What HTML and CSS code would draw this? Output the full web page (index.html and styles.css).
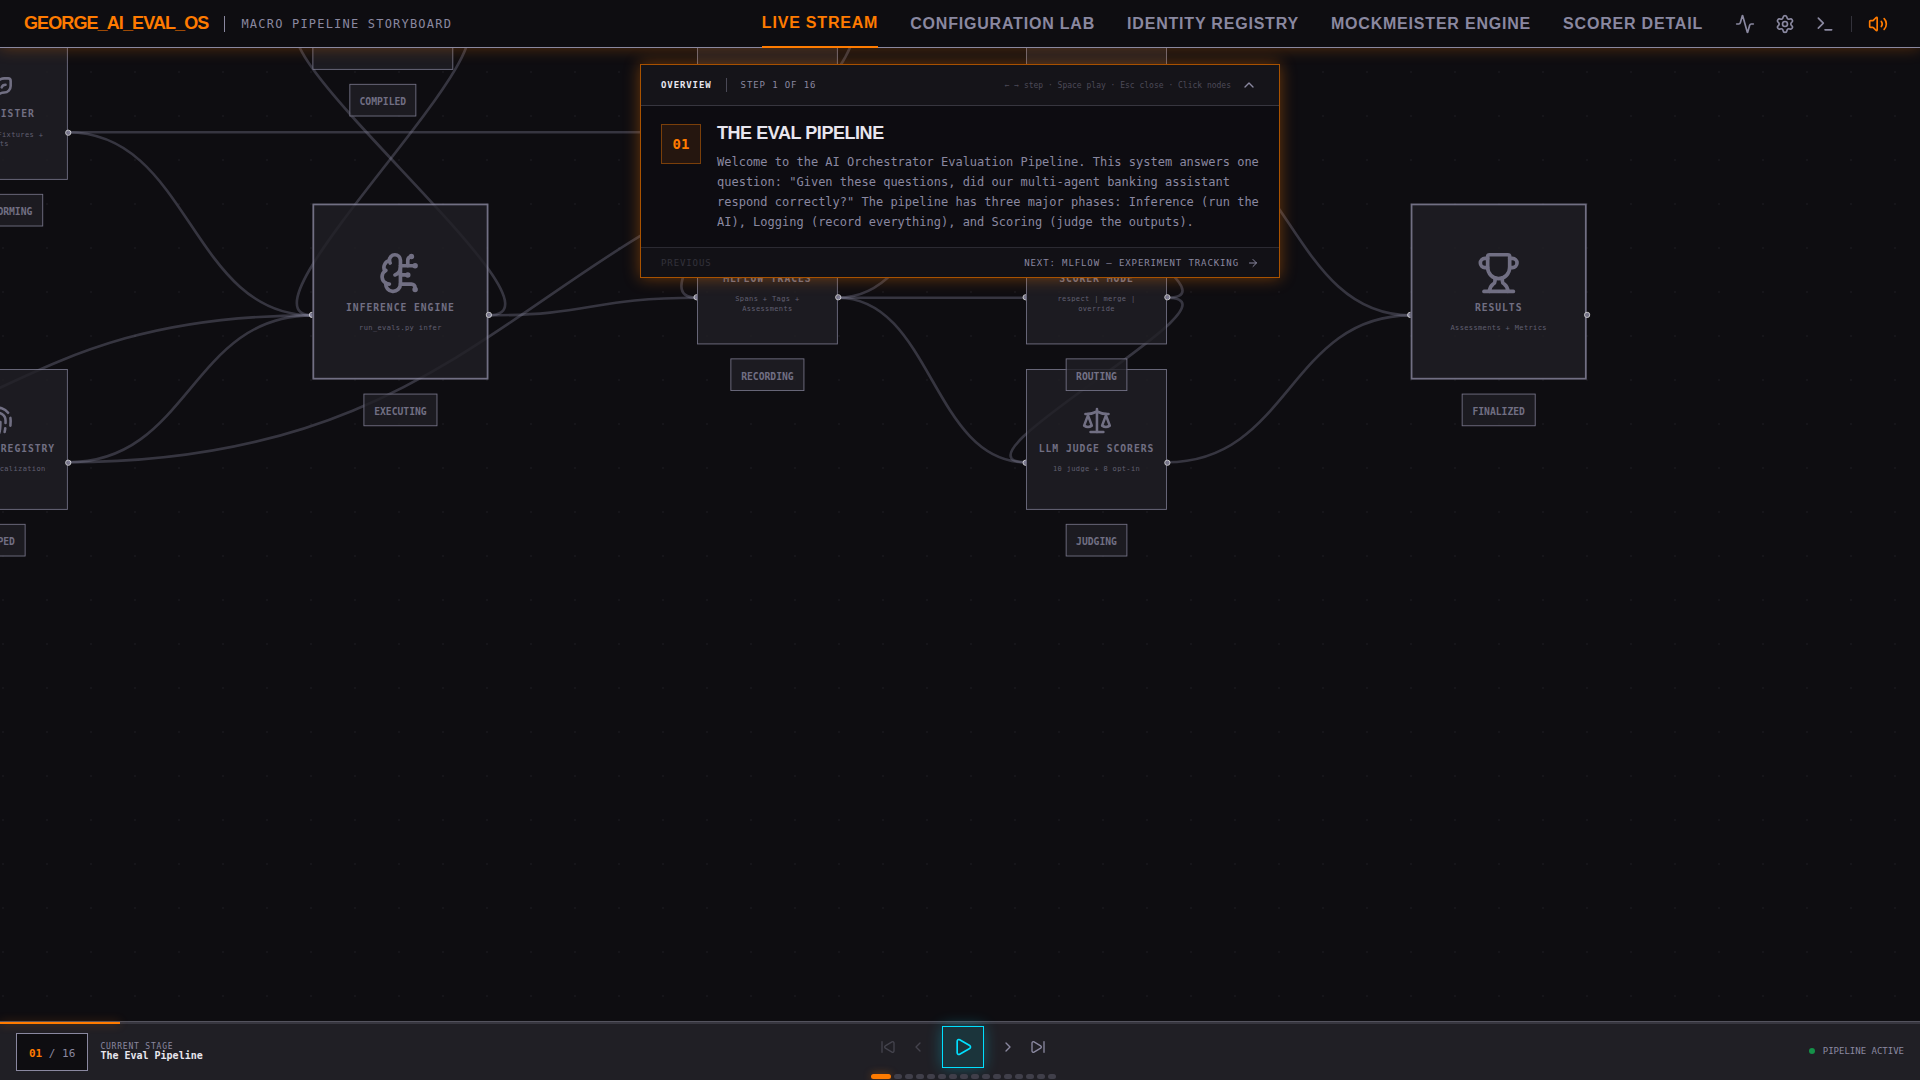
FILE: index.html
```html
<!DOCTYPE html>
<html lang="en">
<head>
    <meta charset="UTF-8">
    <meta name="viewport" content="width=device-width, initial-scale=1.0">
    <title>GEORGE_AI_EVAL_OS</title>
    <link rel="stylesheet" href="styles.css">
</head>
<body>
    <header class="topbar">
        <div class="brand">
            <span class="logo">GEORGE_AI_EVAL_OS</span>
            <span class="brand-divider"></span>
            <span class="subtitle">MACRO PIPELINE STORYBOARD</span>
        </div>
        <div class="topbar-right">
            <nav class="nav">
                <a href="#live" class="active">LIVE STREAM</a>
                <a href="#config">CONFIGURATION LAB</a>
                <a href="#identity">IDENTITY REGISTRY</a>
                <a href="#mock">MOCKMEISTER ENGINE</a>
                <a href="#scorer">SCORER DETAIL</a>
            </nav>
            <div class="tools">
                <button type="button" aria-label="Activity">
                    <svg class="icon" viewBox="0 0 24 24"><path d="M22 12h-2.48a2 2 0 0 0-1.93 1.46l-2.35 8.36a.25.25 0 0 1-.48 0L9.24 2.18a.25.25 0 0 0-.48 0l-2.35 8.36A2 2 0 0 1 4.49 12H2"/></svg>
                </button>
                <button type="button" aria-label="Settings">
                    <svg class="icon" viewBox="0 0 24 24"><path d="M9.671 4.136a2.34 2.34 0 0 1 4.659 0 2.34 2.34 0 0 0 3.319 1.915 2.34 2.34 0 0 1 2.33 4.033 2.34 2.34 0 0 0 0 3.831 2.34 2.34 0 0 1-2.33 4.033 2.34 2.34 0 0 0-3.319 1.915 2.34 2.34 0 0 1-4.659 0 2.34 2.34 0 0 0-3.32-1.915 2.34 2.34 0 0 1-2.33-4.033 2.34 2.34 0 0 0 0-3.831A2.34 2.34 0 0 1 6.35 6.051a2.34 2.34 0 0 0 3.319-1.915"/><circle cx="12" cy="12" r="3"/></svg>
                </button>
                <button type="button" aria-label="Terminal">
                    <svg class="icon" viewBox="0 0 24 24"><path d="M12 19h8"/><path d="m4 17 6-6-6-6"/></svg>
                </button>
                <span class="tools-divider"></span>
                <button type="button" class="sound" aria-label="Sound">
                    <svg class="icon" viewBox="0 0 24 24"><path d="M11 4.702a.705.705 0 0 0-1.203-.498L6.413 7.587A1.4 1.4 0 0 1 5.416 8H3a1 1 0 0 0-1 1v6a1 1 0 0 0 1 1h2.416a1.4 1.4 0 0 1 .997.413l3.383 3.384A.705.705 0 0 0 11 19.298z"/><path d="M16 9a5 5 0 0 1 0 6"/><path d="M19.364 18.364a9 9 0 0 0 0-12.728"/></svg>
                </button>
            </div>
        </div>
    </header>

    <main class="canvas">
        <div class="viewport">
            <svg class="edges" width="1" height="1">
                <path d="M160 231 C705 231 705 231 1249 231"/>
                <path d="M160 231 C299 231 299 439 438 439"/>
                <path d="M-276 606 C80 606 80 439 438 439"/>
                <path d="M160 606 C299 606 299 439 438 439"/>
                <path d="M160 606 C705 606 705 231 1249 231"/>
                <path d="M598 106 C698 106 338 439 438 439"/>
                <path d="M638 439 C750 439 326 106 438 106"/>
                <path d="M638 439 C756 439 756 419 875 419"/>
                <path d="M1035 106 C1135 106 775 419 875 419"/>
                <path d="M1035 419 C1142 419 1142 231 1249 231"/>
                <path d="M1035 419 L1249 419"/>
                <path d="M1035 419 C1142 419 1142 606 1249 606"/>
                <path d="M1409 419 C1509 419 1149 231 1249 231"/>
                <path d="M1409 419 C1509 419 1149 606 1249 606"/>
                <path d="M1409 231 C1548 231 1548 439 1686 439"/>
                <path d="M1409 606 C1548 606 1548 439 1686 439"/>
            </svg>

            <div class="node mockmeister">
                <span class="handle in"></span>
                <div class="box">
                    <svg class="icon" viewBox="0 0 24 24"><path d="M18 11c-1.5 0-2.5.5-3 2"/><path d="M4 6a2 2 0 0 0-2 2v4a5 5 0 0 0 5 5 8 8 0 0 1 5 2 8 8 0 0 1 5-2 5 5 0 0 0 5-5V8a2 2 0 0 0-2-2h-3a8 8 0 0 0-5 2 8 8 0 0 0-5-2z"/><path d="M6 11c1.5 0 2.5.5 3 2"/></svg>
                    <div class="name">MOCKMEISTER</div>
                    <div class="detail">Tool Mock Fixtures +<br>Tests</div>
                </div>
                <div class="state">TRANSFORMING</div>
                <span class="handle out"></span>
            </div>

            <div class="node registry">
                <span class="handle in"></span>
                <div class="box">
                    <svg class="icon" viewBox="0 0 24 24"><path d="M12 10a2 2 0 0 0-2 2c0 1.02-.1 2.51-.26 4"/><path d="M14 13.12c0 2.38 0 6.38-1 8.88"/><path d="M17.29 21.02c.12-.6.43-2.3.5-3.02"/><path d="M2 12a10 10 0 0 1 18-6"/><path d="M2 16h.01"/><path d="M21.8 16c.2-2 .131-5.354 0-6"/><path d="M5 19.5C5.5 18 6 15 6 12a6 6 0 0 1 .34-2"/><path d="M8.65 22c.21-.66.45-1.32.57-2"/><path d="M9 6.8a6 6 0 0 1 9 5.2v2"/></svg>
                    <div class="name">IDENTITY REGISTRY</div>
                    <div class="detail">Identity Localization</div>
                </div>
                <div class="state">MAPPED</div>
                <span class="handle out"></span>
            </div>

            <div class="node compiler">
                <span class="handle in"></span>
                <div class="box"></div>
                <div class="state">COMPILED</div>
                <span class="handle out"></span>
            </div>

            <div class="node large inference">
                <span class="handle in"></span>
                <div class="box">
                    <svg class="icon" viewBox="0 0 24 24"><path d="M12 5a3 3 0 1 0-5.997.125 4 4 0 0 0-2.526 5.77 4 4 0 0 0 .556 6.588A4 4 0 1 0 12 18Z"/><path d="M9 13a4.5 4.5 0 0 0 3-4"/><path d="M6.003 5.125A3 3 0 0 0 6.401 6.5"/><path d="M3.477 10.896a4 4 0 0 1 .585-.396"/><path d="M6 18a4 4 0 0 1-1.967-.516"/><path d="M12 13h4"/><path d="M12 18h6a2 2 0 0 1 2 2v1"/><path d="M12 8h8"/><path d="M16 8V5a2 2 0 0 1 2-2"/><circle cx="16" cy="13" r=".5"/><circle cx="18" cy="3" r=".5"/><circle cx="20" cy="21" r=".5"/><circle cx="20" cy="8" r=".5"/></svg>
                    <div class="name">INFERENCE ENGINE</div>
                    <div class="detail">run_evals.py infer</div>
                </div>
                <div class="state">EXECUTING</div>
                <span class="handle out"></span>
            </div>

            <div class="node mlflow">
                <div class="box"></div>
                <span class="handle out"></span>
            </div>

            <div class="node traces">
                <span class="handle in"></span>
                <div class="box">
                    <svg class="icon" viewBox="0 0 24 24"><path d="M22 12h-4l-3 9L9 3l-3 9H2"/></svg>
                    <div class="name">MLFLOW TRACES</div>
                    <div class="detail">Spans + Tags +<br>Assessments</div>
                </div>
                <div class="state">RECORDING</div>
                <span class="handle out"></span>
            </div>

            <div class="node code-scorers">
                <span class="handle in"></span>
                <div class="box"></div>
                <span class="handle out"></span>
            </div>

            <div class="node judge">
                <span class="handle in"></span>
                <div class="box">
                    <svg class="icon" viewBox="0 0 24 24"><path d="M12 3v18"/><path d="m19 8 3 8a5 5 0 0 1-6 0zV7"/><path d="M3 7h1a17 17 0 0 0 8-2 17 17 0 0 0 8 2h1"/><path d="m5 8 3 8a5 5 0 0 1-6 0zV7"/><path d="M7 21h10"/></svg>
                    <div class="name">LLM JUDGE SCORERS</div>
                    <div class="detail">10 judge + 8 opt-in</div>
                </div>
                <div class="state">JUDGING</div>
                <span class="handle out"></span>
            </div>

            <div class="node scorer-mode">
                <span class="handle in"></span>
                <div class="box">
                    <svg class="icon" viewBox="0 0 24 24"><path d="M6 3v12"/><circle cx="18" cy="6" r="3"/><circle cx="6" cy="18" r="3"/><path d="M18 9a9 9 0 0 1-9 9"/></svg>
                    <div class="name">SCORER MODE</div>
                    <div class="detail">respect | merge |<br>override</div>
                </div>
                <div class="state">ROUTING</div>
                <span class="handle out"></span>
            </div>

            <div class="node large results">
                <span class="handle in"></span>
                <div class="box">
                    <svg class="icon" viewBox="0 0 24 24"><path d="M10 14.66v1.626a2 2 0 0 1-.976 1.696A5 5 0 0 0 7 21.978"/><path d="M14 14.66v1.626a2 2 0 0 0 .976 1.696A5 5 0 0 1 17 21.978"/><path d="M18 9h1.5a1 1 0 0 0 0-5H18"/><path d="M4 22h16"/><path d="M6 9a6 6 0 0 0 12 0V3a1 1 0 0 0-1-1H7a1 1 0 0 0-1 1z"/><path d="M6 9H4.5a1 1 0 0 1 0-5H6"/></svg>
                    <div class="name">RESULTS</div>
                    <div class="detail">Assessments + Metrics</div>
                </div>
                <div class="state">FINALIZED</div>
                <span class="handle out"></span>
            </div>
        </div>

        <section class="panel">
            <div class="panel-head">
                <strong>OVERVIEW</strong>
                <span class="panel-divider"></span>
                <span>STEP 1 OF 16</span>
                <span class="hint">← → step · Space play · Esc close · Click nodes</span>
                <button type="button" class="collapse" aria-label="Collapse">
                    <svg class="icon" viewBox="0 0 24 24"><path d="m18 15-6-6-6 6"/></svg>
                </button>
            </div>
            <div class="panel-body">
                <div class="step-number">01</div>
                <div>
                    <h1>THE EVAL PIPELINE</h1>
                    <p>Welcome to the AI Orchestrator Evaluation Pipeline. This system answers one question: "Given these questions, did our multi-agent banking assistant respond correctly?" The pipeline has three major phases: Inference (run the AI), Logging (record everything), and Scoring (judge the outputs).</p>
                </div>
            </div>
            <div class="panel-foot">
                <button type="button" disabled>PREVIOUS</button>
                <button type="button">
                    NEXT: MLFLOW — EXPERIMENT TRACKING
                    <svg class="icon" viewBox="0 0 24 24"><path d="M5 12h14"/><path d="m12 5 7 7-7 7"/></svg>
                </button>
            </div>
        </section>
    </main>

    <footer class="player">
        <div class="track"><div class="track-fill" style="width: 6.25%"></div></div>
        <div class="player-row">
            <div class="stage">
                <div class="counter"><b>01</b> / 16</div>
                <div>
                    <div class="stage-label">CURRENT STAGE</div>
                    <div class="stage-name">The Eval Pipeline</div>
                </div>
            </div>
            <div class="controls">
                <div class="buttons">
                    <button type="button" aria-label="First step" disabled>
                        <svg class="icon" viewBox="0 0 24 24"><path d="M17.971 4.285A2 2 0 0 1 21 6v12a2 2 0 0 1-3.029 1.715l-9.997-5.998a2 2 0 0 1-.003-3.432z"/><path d="M3 20V4"/></svg>
                    </button>
                    <button type="button" aria-label="Previous step" disabled>
                        <svg class="icon" viewBox="0 0 24 24"><path d="m15 18-6-6 6-6"/></svg>
                    </button>
                    <button type="button" class="play" aria-label="Play">
                        <svg class="icon" viewBox="0 0 24 24"><path d="M5 5a2 2 0 0 1 3.008-1.728l11.997 6.998a2 2 0 0 1 .003 3.458l-12 7A2 2 0 0 1 5 19z"/></svg>
                    </button>
                    <button type="button" aria-label="Next step">
                        <svg class="icon" viewBox="0 0 24 24"><path d="m9 18 6-6-6-6"/></svg>
                    </button>
                    <button type="button" aria-label="Last step">
                        <svg class="icon" viewBox="0 0 24 24"><path d="M21 4v16"/><path d="M6.029 4.285A2 2 0 0 0 3 6v12a2 2 0 0 0 3.029 1.715l9.997-5.998a2 2 0 0 0 .003-3.432z"/></svg>
                    </button>
                </div>
                <div class="steps">
                    <button type="button" class="current" aria-label="Step 1"></button>
                    <button type="button" aria-label="Step 2"></button>
                    <button type="button" aria-label="Step 3"></button>
                    <button type="button" aria-label="Step 4"></button>
                    <button type="button" aria-label="Step 5"></button>
                    <button type="button" aria-label="Step 6"></button>
                    <button type="button" aria-label="Step 7"></button>
                    <button type="button" aria-label="Step 8"></button>
                    <button type="button" aria-label="Step 9"></button>
                    <button type="button" aria-label="Step 10"></button>
                    <button type="button" aria-label="Step 11"></button>
                    <button type="button" aria-label="Step 12"></button>
                    <button type="button" aria-label="Step 13"></button>
                    <button type="button" aria-label="Step 14"></button>
                    <button type="button" aria-label="Step 15"></button>
                    <button type="button" aria-label="Step 16"></button>
                </div>
            </div>
            <div class="status"><span class="status-dot"></span>PIPELINE ACTIVE</div>
        </div>
    </footer>
</body>
</html>
```
FILE: styles.css
```css
:root {
    --bg: #0e0d11;
    --surface: #201f25;
    --muted: #8a88a0;
    --text: #e8e6ee;
    --orange: #ff7b00;
    --cyan: #00e0ff;
    --mono: "DejaVu Sans Mono", monospace;
    --sans: "Liberation Sans", Arial, sans-serif;
}

* {
    box-sizing: border-box;
}

body {
    margin: 0;
    height: 100vh;
    display: flex;
    flex-direction: column;
    overflow: hidden;
    background: var(--bg);
    color: var(--muted);
    font-family: var(--mono);
}

button {
    display: flex;
    align-items: center;
    justify-content: center;
    padding: 0;
    border: none;
    background: none;
    color: inherit;
    font: inherit;
    letter-spacing: inherit;
    cursor: pointer;
}

.icon {
    display: block;
    flex: none;
    width: 16px;
    height: 16px;
    fill: none;
    stroke: currentColor;
    stroke-width: 2;
    stroke-linecap: round;
    stroke-linejoin: round;
}

/* top bar */
.topbar {
    position: relative;
    z-index: 2;
    flex: none;
    height: 48px;
    padding: 0 24px;
    display: flex;
    align-items: center;
    justify-content: space-between;
    background: var(--bg);
    border-bottom: 1px solid var(--muted);
    box-shadow: 0 0 15px rgba(255, 123, 0, 0.3);
}

.brand, .topbar-right, .nav, .tools {
    display: flex;
    align-items: center;
}

.brand {
    gap: 16px;
}

.logo {
    font: bold 18px var(--sans);
    letter-spacing: -0.05em;
    color: var(--orange);
}

.brand-divider {
    width: 1px;
    height: 16px;
    background: var(--muted);
}

.subtitle {
    font-size: 12px;
    letter-spacing: 0.1em;
}

.topbar-right {
    gap: 24px;
    height: 100%;
}

.nav {
    gap: 32px;
    height: 100%;
}

.nav a {
    display: flex;
    align-items: center;
    height: 48px;
    font: bold 16px var(--sans);
    letter-spacing: 0.05em;
    color: var(--muted);
    text-decoration: none;
}

.nav a.active {
    color: var(--orange);
    border-bottom: 2px solid var(--orange);
}

.tools {
    gap: 4px;
}

.tools button {
    width: 36px;
    height: 36px;
}

.tools .icon {
    width: 20px;
    height: 20px;
}

.tools .sound {
    color: var(--orange);
}

.tools-divider {
    width: 1px;
    height: 16px;
    margin: 0 4px;
    background: #33323b;
}

/* pipeline canvas */
.canvas {
    position: relative;
    flex: 1;
    min-height: 0;
    overflow: hidden;
    background-image: radial-gradient(circle, #16151a 1px, transparent 1px);
    background-size: 44px 44px;
    background-position: -19px 2px;
}

.viewport {
    position: absolute;
    top: 0;
    left: 0;
    transform: translate(-73px, -119px) scale(0.88);
    transform-origin: 0 0;
}

.edges {
    position: absolute;
    overflow: visible;
    fill: none;
    stroke: var(--muted);
    stroke-width: 3;
    stroke-opacity: 0.33;
}

.node {
    position: absolute;
    width: 160px;
    display: flex;
    flex-direction: column;
    align-items: center;
    opacity: 0.8;
}

.node.large {
    width: 200px;
}

.mockmeister { left: 0; top: 125px; }
.registry { left: 0; top: 500px; }
.compiler { left: 438px; top: 0; }
.inference { left: 438px; top: 312px; }
.mlflow { left: 875px; top: 0; }
.traces { left: 875px; top: 312px; }
.code-scorers { left: 1249px; top: 125px; }
.scorer-mode { left: 1249px; top: 312px; }
.judge { left: 1249px; top: 500px; }
.results { left: 1686px; top: 312px; }

.box {
    position: relative;
    width: 100%;
    height: 160px;
    display: flex;
    flex-direction: column;
    align-items: center;
    justify-content: center;
    background: var(--surface);
    border: 1px solid var(--muted);
    text-align: center;
}

.large .box {
    height: 200px;
    border-width: 2px;
}

.box .icon {
    width: 35px;
    height: 35px;
}

.large .icon {
    width: 50px;
    height: 50px;
}

.name {
    margin-top: 8px;
    font-size: 11px;
    line-height: 14px;
    font-weight: bold;
    letter-spacing: 0.1em;
    white-space: nowrap;
}

.detail {
    margin-top: 10px;
    font-size: 8px;
    line-height: 11px;
    letter-spacing: 0.05em;
    opacity: 0.8;
}

.state {
    position: relative;
    height: 37px;
    margin-top: 16px;
    padding: 2px 11px 0;
    background: var(--surface);
    border: 1px solid var(--muted);
    font-size: 11px;
    line-height: 35px;
    font-weight: bold;
}

.handle {
    position: absolute;
    top: 50%;
    width: 7px;
    height: 7px;
    margin-top: -4px;
    border: 1px solid #fff;
    border-radius: 50%;
    background: var(--muted);
}

.handle.in {
    left: -4px;
}

.handle.out {
    right: -4px;
}

/* story panel */
.panel {
    position: absolute;
    top: 16px;
    left: 0;
    right: 0;
    width: 640px;
    margin: 0 auto;
    background: #0d0c11;
    border: 1px solid #a85200;
    box-shadow: 0 0 15px rgba(255, 123, 0, 0.4);
}

.panel-head {
    display: flex;
    align-items: center;
    gap: 14px;
    padding: 10px 20px;
    background: #151419;
    border-bottom: 1px solid #37363f;
    font-size: 9px;
    letter-spacing: 0.1em;
}

.panel-head strong {
    color: var(--text);
}

.panel-divider {
    width: 1px;
    height: 14px;
    background: #4a4956;
}

.hint {
    margin-left: auto;
    margin-right: -6px;
    font-size: 8px;
    letter-spacing: 0;
    color: #4c4a58;
}

.collapse {
    width: 20px;
    height: 20px;
}

.panel-body {
    display: flex;
    gap: 16px;
    padding: 18px 20px 15px;
}

.step-number {
    flex: none;
    width: 40px;
    height: 40px;
    border: 1px solid #7a3f0a;
    background: #25160f;
    color: var(--orange);
    font-size: 14px;
    line-height: 38px;
    font-weight: bold;
    text-align: center;
}

h1 {
    margin: 0 0 10px;
    font: bold 18px/18px var(--sans);
    letter-spacing: -0.025em;
    color: var(--text);
}

p {
    margin: 0;
    font-size: 12px;
    line-height: 20px;
}

.panel-foot {
    display: flex;
    justify-content: space-between;
    height: 30px;
    padding: 0 20px;
    background: #121116;
    border-top: 1px solid #2b2a32;
    font-size: 9px;
    letter-spacing: 0.1em;
}

.panel-foot button {
    gap: 8px;
}

.panel-foot button:disabled {
    color: #33323b;
}

.panel-foot .icon {
    width: 12px;
    height: 12px;
}

/* player bar */
.player {
    position: relative;
    z-index: 2;
    flex: none;
    height: 59px;
    display: flex;
    flex-direction: column;
    background: var(--surface);
    border-top: 1px solid #53525d;
}

.track {
    height: 2px;
    background: #37363f;
}

.track-fill {
    height: 100%;
    background: var(--orange);
    box-shadow: 0 0 10px rgba(255, 123, 0, 0.4);
}

.player-row {
    flex: 1;
    display: grid;
    grid-template-columns: 1fr auto 1fr;
    align-items: center;
    padding: 0 10px 0 16px;
}

.stage {
    display: flex;
    align-items: center;
    gap: 12px;
}

.counter {
    height: 38px;
    padding: 2px 12px 0;
    background: var(--bg);
    border: 1px solid var(--muted);
    font-size: 11px;
    line-height: 36px;
}

.counter b {
    color: var(--orange);
}

.stage-label {
    font-size: 8px;
    line-height: 9px;
    letter-spacing: 0.1em;
}

.stage-name {
    margin-bottom: 2px;
    font-size: 10px;
    line-height: 10px;
    font-weight: bold;
    color: var(--text);
}

.controls {
    display: flex;
    flex-direction: column;
    align-items: center;
    gap: 6px;
}

.buttons {
    display: flex;
    align-items: center;
    gap: 8px;
}

.buttons button {
    width: 22px;
    height: 22px;
}

.buttons button:disabled {
    color: #44434d;
}

.buttons .play {
    width: 42px;
    height: 42px;
    margin: 0 5px;
    color: var(--cyan);
    background: #1b343b;
    border: 1px solid var(--cyan);
    box-shadow: 0 0 15px rgba(0, 224, 255, 0.3);
}

.play .icon {
    width: 20px;
    height: 20px;
}

.steps {
    display: flex;
    gap: 3px;
}

.steps button {
    width: 8px;
    height: 5px;
    border-radius: 3px;
    background: #403f4a;
}

.steps .current {
    width: 20px;
    background: var(--orange);
    box-shadow: 0 0 8px rgba(255, 123, 0, 0.4);
}

.status {
    display: flex;
    align-items: center;
    justify-content: flex-end;
    gap: 8px;
    padding: 0 6px 2px 0;
    font-size: 9px;
}

.status-dot {
    width: 6px;
    height: 6px;
    border-radius: 50%;
    background: #159149;
}
```
